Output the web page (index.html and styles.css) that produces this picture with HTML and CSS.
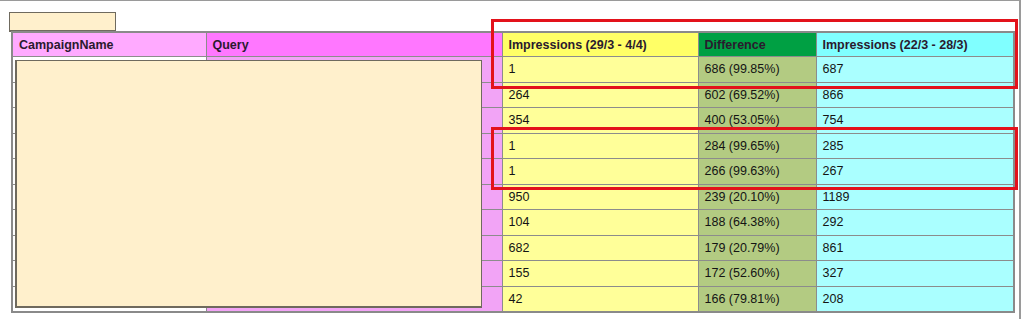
FILE: index.html
```html
<!DOCTYPE html>
<html>
<head>
<meta charset="utf-8">
<link rel="stylesheet" href="styles.css">
</head>
<body>
<div class="frame">
  <div class="tag"></div>
  <table class="report">
    <colgroup>
      <col class="c1"><col class="c2"><col class="c3"><col class="c4"><col class="c5">
    </colgroup>
    <thead>
      <tr>
        <th class="h-camp">CampaignName</th>
        <th class="h-query">Query</th>
        <th class="h-imp">Impressions (29/3 - 4/4)</th>
        <th class="h-diff">Difference</th>
        <th class="h-prev">Impressions (22/3 - 28/3)</th>
      </tr>
    </thead>
    <tbody>
      <tr><td class="camp"></td><td class="query"></td><td class="imp">1</td><td class="diff">686 (99.85%)</td><td class="prev">687</td></tr>
      <tr><td class="camp"></td><td class="query"></td><td class="imp">264</td><td class="diff">602 (69.52%)</td><td class="prev">866</td></tr>
      <tr><td class="camp"></td><td class="query"></td><td class="imp">354</td><td class="diff">400 (53.05%)</td><td class="prev">754</td></tr>
      <tr><td class="camp"></td><td class="query"></td><td class="imp">1</td><td class="diff">284 (99.65%)</td><td class="prev">285</td></tr>
      <tr><td class="camp"></td><td class="query"></td><td class="imp">1</td><td class="diff">266 (99.63%)</td><td class="prev">267</td></tr>
      <tr><td class="camp"></td><td class="query"></td><td class="imp">950</td><td class="diff">239 (20.10%)</td><td class="prev">1189</td></tr>
      <tr><td class="camp"></td><td class="query"></td><td class="imp">104</td><td class="diff">188 (64.38%)</td><td class="prev">292</td></tr>
      <tr><td class="camp"></td><td class="query"></td><td class="imp">682</td><td class="diff">179 (20.79%)</td><td class="prev">861</td></tr>
      <tr><td class="camp"></td><td class="query"></td><td class="imp">155</td><td class="diff">172 (52.60%)</td><td class="prev">327</td></tr>
      <tr><td class="camp"></td><td class="query"></td><td class="imp">42</td><td class="diff">166 (79.81%)</td><td class="prev">208</td></tr>
    </tbody>
  </table>
  <div class="redact"></div>
  <div class="highlight hl-1"></div>
  <div class="highlight hl-2"></div>
</div>
</body>
</html>
```

FILE: styles.css
```css
html, body {
  margin: 0;
  padding: 0;
  background: #ffffff;
}

.frame {
  position: relative;
  width: 1021px;
  height: 319px;
  border-top: 1px solid #9a9a9a;
  border-right: 2px solid #9a9a9a;
  font-family: "Liberation Sans", Arial, sans-serif;
  font-size: 12.5px;
  color: #141414;
  padding-top: 11px;
  box-sizing: border-box;
}

.tag {
  margin-left: 9px;
  width: 107px;
  height: 20px;
  box-sizing: border-box;
  background: #fff0cc;
  border: 1px solid #6f6a5e;
  border-bottom-width: 2px;
  margin-bottom: -1px;
}

.report {
  margin-left: 11px;
  border-collapse: collapse;
  table-layout: fixed;
  width: 1002px;
  border: 2px solid #8a8a8a;
}

.c1 { width: 194px; }
.c2 { width: 296px; }
.c3 { width: 196px; }
.c4 { width: 118px; }
.c5 { width: 198px; }

.report th,
.report td {
  border: 1px solid #8c8c8c;
  padding: 0 6px;
  text-align: left;
  white-space: nowrap;
  overflow: hidden;
}

.report th {
  height: 23px;
  font-weight: bold;
  color: #2a1a2e;
}

.report td {
  height: 24.5px;
}

.h-camp { background: #ffaaff; }
.h-query { background: #ff77ff; }
.h-imp { background: #ffff66; }
.h-diff { background: #00a043; color: #0d3018; }
.h-prev { background: #80ffff; }

.camp { background: #ffffff; }
.query { background: #f2a4f6; }
.imp { background: #ffff99; }
.diff { background: #b3cb82; }
.prev { background: #aaffff; }

.redact {
  position: absolute;
  left: 15px;
  top: 59px;
  width: 467px;
  height: 248px;
  box-sizing: border-box;
  background: #fff0cc;
  border: 2px solid #6f6a5e;
  border-top-width: 1px;
  border-right-width: 1px;
}

.highlight {
  position: absolute;
  left: 491px;
  width: 527px;
  box-sizing: border-box;
  border: 3px solid #e3121b;
}

.hl-1 {
  top: 18px;
  height: 70px;
}

.hl-2 {
  top: 126px;
  height: 63px;
}
```
